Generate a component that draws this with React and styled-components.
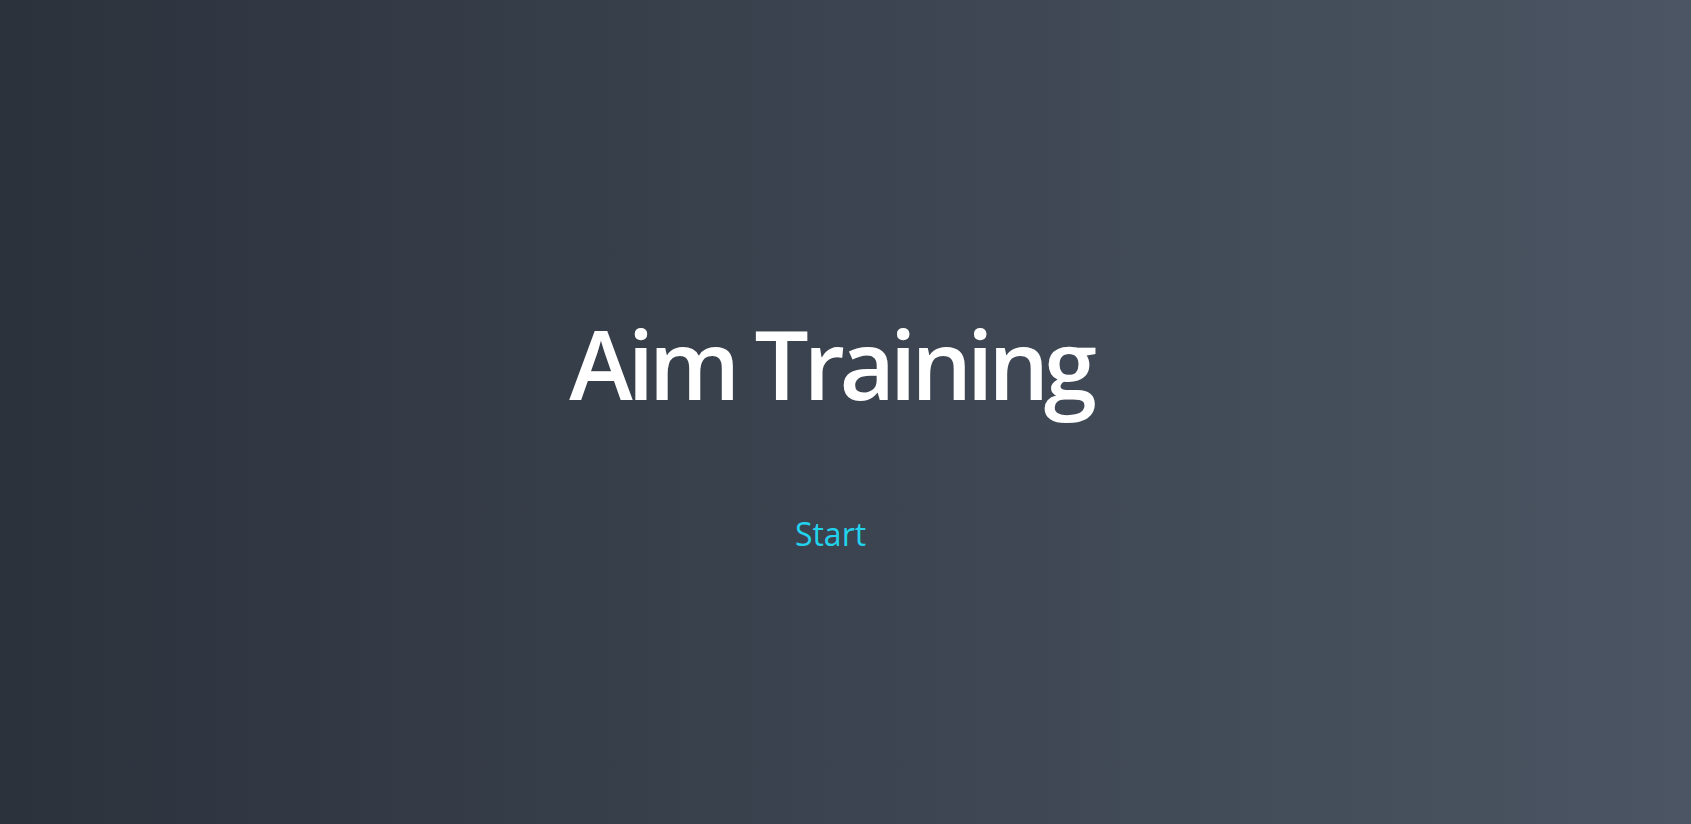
import React from 'react'
import styled, { createGlobalStyle } from 'styled-components'

const GlobalStyle = createGlobalStyle`
    html, body {
        margin: 0;
        padding: 0;
    }
    body {
        font-family: "Open Sans", "Noto Sans", sans-serif;
    }
`

const App = () => {
    return (
        <>
            <GlobalStyle />
            <Wrapper>
                <Title>Aim Training</Title>
                <StartButton>Start</StartButton>
            </Wrapper>
        </>
    );
}

const Wrapper = styled.main`
    height: 100vh;
    box-sizing: border-box;
    padding-right: 30px;
    display: flex;
    flex-direction: column;
    align-items: center;
    justify-content: center;
    background: linear-gradient(to right, #2b323c, #4b5563);
`

const Title = styled.h1`
    margin: 40px 0 0 0;
    color: #ffffff;
    font-size: 96px;
    font-weight: 600;
    line-height: 1.2;
    letter-spacing: -0.056em;
`

const StartButton = styled.button`
    margin-top: 88px;
    background: none;
    border: none;
    padding: 4px 12px;
    color: #22d3ee;
    font-family: "Open Sans", "Noto Sans", sans-serif;
    font-size: 32px;
    cursor: pointer;
`

export default App
